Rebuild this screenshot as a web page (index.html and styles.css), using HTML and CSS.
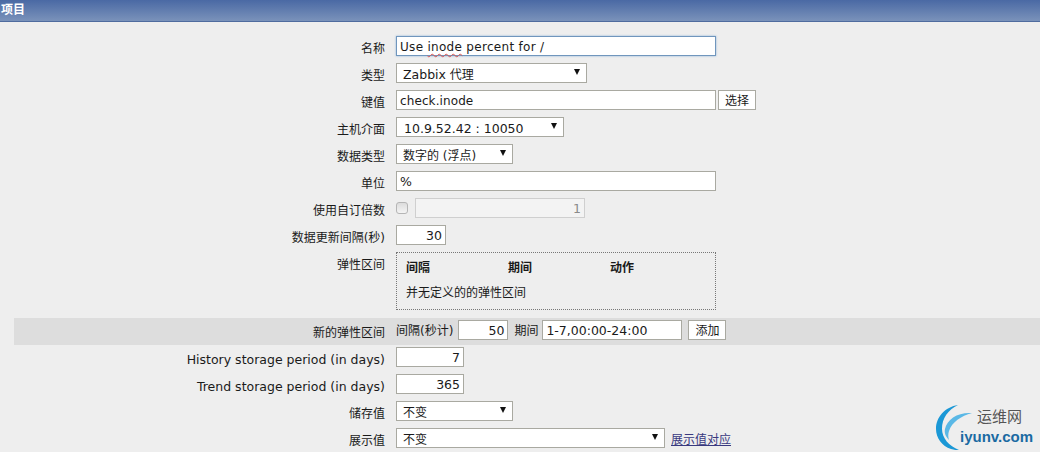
FILE: index.html
```html
<!DOCTYPE html>
<html lang="zh-CN">
<head>
<meta charset="utf-8">
<title>项目</title>
<link rel="stylesheet" href="styles.css">
</head>
<body>
<header class="title-bar">项目</header>
<form class="form">
  <div class="row"><label class="label">名称</label><div class="value"><div class="input w320 focused name">Use <span class="misspelled">inode</span> percent for /</div></div></div>
  <div class="row"><label class="label">类型</label><div class="value"><div class="select w191"><span class="latin">Zabbix</span> 代理</div></div></div>
  <div class="row"><label class="label">键值</label><div class="value"><div class="input w320 key">check.inode</div><button type="button" class="btn">选择</button></div></div>
  <div class="row"><label class="label">主机介面</label><div class="value"><div class="select w168"><span class="latin host">10.9.52.42 : 10050</span></div></div></div>
  <div class="row"><label class="label">数据类型</label><div class="value"><div class="select w117">数字的 (浮点)</div></div></div>
  <div class="row"><label class="label">单位</label><div class="value"><div class="input w320">%</div></div></div>
  <div class="row"><label class="label">使用自订倍数</label><div class="value gap-check"><span class="check"></span><div class="input w170 disabled num">1</div></div></div>
  <div class="row"><label class="label">数据更新间隔(秒)</label><div class="value"><div class="input w50 num">30</div></div></div>
  <div class="row row-flex"><label class="label">弹性区间</label>
    <div class="flex-box">
      <div class="flex-head"><span class="col">间隔</span><span class="col">期间</span><span class="col">动作</span></div>
      <div class="flex-empty">并无定义的的弹性区间</div>
    </div>
  </div>
  <div class="row band"><label class="label">新的弹性区间</label>
    <div class="value band-value">
      <span class="inline-label">间隔(秒计)</span><div class="input w50 num">50</div>
      <span class="inline-label period">期间</span><div class="input w140">1-7,00:00-24:00</div>
      <button type="button" class="btn add">添加</button>
    </div>
  </div>
  <div class="row"><label class="label latin">History storage period (in days)</label><div class="value"><div class="input w68 num">7</div></div></div>
  <div class="row"><label class="label latin">Trend storage period (in days)</label><div class="value"><div class="input w68 num">365</div></div></div>
  <div class="row"><label class="label">储存值</label><div class="value"><div class="select w117">不变</div></div></div>
  <div class="row"><label class="label">展示值</label><div class="value"><div class="select w269">不变</div><a class="link" href="#">展示值对应</a></div></div>
</form>
<div class="watermark">
  <svg class="watermark-arc" width="44" height="48" viewBox="0 0 44 48" aria-hidden="true">
    <path d="M22 1C9 3 0 13 0 25c0 9 6 17 15 20 3 1 6 1 8 1C13 42 6 34 6 25 6 14 12 6 22 1Z" fill="#1b98d6"/>
    <path d="M36 9C22 8 11 15 9 25c-1 4 1 8 4 11-1-3-1-6 0-9 3-9 12-15 23-18Z" fill="#5ab8e6"/>
  </svg>
  <span class="wm-cn">运维网</span>
  <span class="wm-en">iyunv.com</span>
</div>
</body>
</html>
```
FILE: styles.css
```css
* { box-sizing: border-box; }
html, body { margin: 0; padding: 0; }
body {
  position: relative;
  height: 452px;
  overflow: hidden;
  background: #eeeeee;
  color: #1a1a1a;
  font: 12px/16px "DejaVu Sans", "Noto Sans CJK SC", sans-serif;
}
.latin { font-size: 12.5px; }
.title-bar {
  height: 22px;
  padding-left: 1px;
  background: linear-gradient(#4a69a4, #7a92ba);
  border-bottom: 1px solid #4f6b9e;
  color: #fff;
  font-weight: bold;
  line-height: 21px;
}
.form { padding: 14px 0 0 14px; }
.row {
  display: grid;
  grid-template-columns: 371px 1fr;
  grid-template-rows: 20px;
  column-gap: 11px;
  align-items: center;
  height: 20px;
  margin-bottom: 7px;
}
.label { padding-top: 6px; text-align: right; white-space: nowrap; }
.value { display: flex; align-items: center; }
.gap-check { gap: 7px; }
.input, .select {
  height: 20px;
  border: 1px solid #a9a9a1;
  background: #fff;
  white-space: nowrap;
}
.input { padding: 0 3px; font-size: 12.5px; line-height: 20px; }
.name { font-size: 12px; letter-spacing: 0.3px; }
.key { font-size: 12px; letter-spacing: 0.1px; }
.w320 { width: 320px; }
.w170 { width: 170px; }
.w140 { width: 140px; }
.w68 { width: 68px; }
.w50 { width: 50px; }
.w191 { width: 191px; }
.w168 { width: 168px; }
.w117 { width: 117px; }
.w269 { width: 269px; }
.focused { border-color: #7096bd; box-shadow: 0 0 2px #8fb4d8; }
.misspelled { text-decoration: underline wavy #d9534f 1px; text-underline-offset: 2px; }
.num { text-align: right; }
.disabled { background: #f3f3f3; border-color: #cfcfcf; color: #8a8a8a; }
.select { position: relative; padding-left: 6px; line-height: 22px; overflow: hidden; }
.select::after {
  content: "";
  position: absolute;
  top: 5px;
  right: 6px;
  border-style: solid;
  border-width: 6px 3px 0;
  border-color: #111 transparent transparent;
}
.host { margin-left: 1px; }
.check {
  width: 12px;
  height: 12px;
  border: 1px solid #b5b5b5;
  border-radius: 3px;
  background: linear-gradient(#dcdcdc, #f4f4f4);
}
.btn {
  height: 20px;
  margin-left: 2px;
  padding: 2px 6px 0;
  border: 1px solid #a9a9a1;
  background: #fff;
  color: inherit;
  font: inherit;
  line-height: 16px;
}
.row-flex { grid-template-rows: 58px; height: 58px; margin-bottom: 8px; align-items: start; }
.row-flex .label { padding-top: 5px; }
.flex-box {
  width: 320px;
  height: 58px;
  padding: 7px 9px;
  border: 1px dotted #777;
}
.flex-head { display: flex; font-weight: bold; }
.col { flex: 0 0 102px; }
.flex-empty { margin-top: 9px; }
.band { grid-template-rows: 27px; height: 27px; margin-bottom: 2px; background: #dddddd; align-items: start; }
.band .label { padding-top: 7px; }
.band-value { padding-top: 2px; }
.inline-label { margin-right: 5px; padding-top: 1px; }
.period { margin-left: 6px; margin-right: 4px; }
.add { margin-left: 6px; }
.link { margin-left: 6px; padding-top: 4px; color: #39397f; }
.watermark { position: absolute; left: 936px; top: 404px; width: 104px; height: 48px; }
.watermark-arc { position: absolute; left: 0; top: 0; }
.wm-cn {
  position: absolute;
  left: 41px;
  top: 3px;
  color: #555;
  font-size: 15px;
  line-height: 18px;
  font-family: "Noto Sans CJK SC", sans-serif;
}
.wm-en {
  position: absolute;
  left: 24px;
  top: 24px;
  color: #1a6aa2;
  font: bold 15px/18px "Liberation Sans", sans-serif;
}
```
